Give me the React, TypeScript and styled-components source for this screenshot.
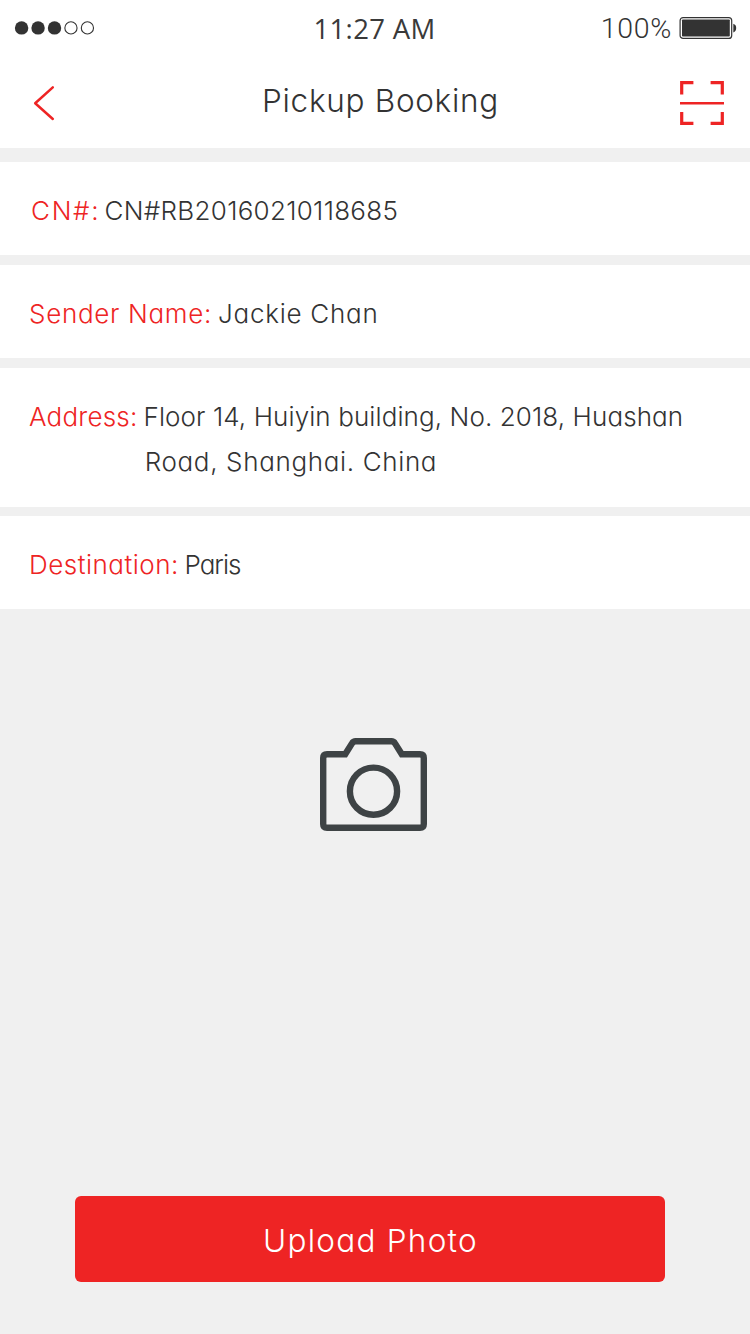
import React from 'react';
import styled, { createGlobalStyle } from 'styled-components';

const RED = '#ee2424';
const INK = '#333333';

const GlobalStyle = createGlobalStyle`
  * { box-sizing: border-box; }
  body { margin: 0; background: #f0f0f0; }
`;

const Screen = styled.main`
  display: flex;
  flex-direction: column;
  width: 750px;
  height: 1334px;
  background: #f0f0f0;
  color: ${INK};
  font-family: Inter, sans-serif;
  font-weight: 300;
  /* cv11 is Inter's single-storey "a" */
  font-feature-settings: 'cv11', 'calt' 0;
`;

const Top = styled.div`
  height: 148px;
  background: #fff;
`;

const StatusBar = styled.div`
  display: grid;
  grid-template-columns: 1fr auto 1fr;
  align-items: center;
  height: 55px;
  padding: 0 13px 0 14px;
`;

const Clock = styled.span`
  padding-right: 2px;
  font: 400 27.5px/55px 'Open Sans', sans-serif;
  letter-spacing: 0.34px;
  color: #3a3a3a;
`;

const Power = styled.div`
  display: flex;
  align-items: center;
  justify-content: flex-end;
  gap: 7px;
`;

const Percent = styled.span`
  padding-top: 1px;
  font: 300 28.5px/55px Roboto, sans-serif;
  letter-spacing: 0.7px;
`;

const NavBar = styled.header`
  display: grid;
  grid-template-columns: 60px 1fr 60px;
  height: 93px;
  padding: 26px 26px 0 33px;
`;

const IconButton = styled.button<{ $end?: boolean }>`
  display: flex;
  justify-content: ${(p) => (p.$end ? 'flex-end' : 'flex-start')};
  align-items: flex-start;
  padding: 0;
  border: 0;
  background: none;
`;

const Title = styled.h1`
  margin: 0;
  padding-left: 4px;
  font-size: 31.5px;
  font-weight: 300;
  line-height: 40px;
  letter-spacing: 0.7px;
  text-align: center;
  white-space: nowrap;
`;

const Details = styled.dl`
  display: flex;
  flex-direction: column;
  margin: 14px 0 0;
`;

const Row = styled.div<{ $gap?: number; $inset?: number; $tall?: boolean }>`
  display: flex;
  margin-bottom: ${(p) => p.$gap ?? 0}px;
  padding: 26px 0 ${(p) => (p.$tall ? 23 : 22)}px ${(p) => p.$inset ?? 29}px;
  background: #fff;
  font-size: 26px;
  line-height: 45px;
  white-space: nowrap;
`;

const Label = styled.dt<{ $width: number; $tracking: number }>`
  flex: none;
  width: ${(p) => p.$width}px;
  letter-spacing: ${(p) => p.$tracking}px;
  color: ${RED};
`;

const Value = styled.dd<{ $tracking?: number }>`
  margin: 0;
  letter-spacing: ${(p) => p.$tracking ?? 0}px;
`;

const Line = styled.div<{ $tracking: number; $indent?: number }>`
  padding-left: ${(p) => p.$indent ?? 0}px;
  letter-spacing: ${(p) => p.$tracking}px;
`;

const PhotoArea = styled.section`
  display: flex;
  flex: 1;
  flex-direction: column;
  align-items: flex-start;
  justify-content: space-between;
  padding: 129px 75px 52px;
`;

const CameraButton = styled.button`
  display: flex;
  margin-left: 245px;
  padding: 0;
  border: 0;
  background: none;
`;

const UploadButton = styled.button`
  width: 590px;
  height: 86px;
  padding: 2px 0 0 1px;
  border: 0;
  border-radius: 6px;
  background: ${RED};
  color: #fff;
  font: inherit;
  font-feature-settings: inherit;
  font-size: 31.5px;
  letter-spacing: 1.25px;
`;

const SignalDots = () => (
  <svg width="82" height="16" viewBox="0 0 82 16">
    {[0, 1, 2, 3, 4].map((i) => (
      <circle
        key={i}
        cx={7.6 + i * 16.45}
        cy="7.9"
        r={i < 3 ? 6.7 : 6.1}
        fill={i < 3 ? INK : 'none'}
        stroke={i < 3 ? 'none' : INK}
        strokeWidth="1.1"
      />
    ))}
  </svg>
);

const BatteryIcon = () => (
  <svg width="58" height="24" viewBox="0 0 58 24">
    <rect x="1.1" y="1.6" width="51.6" height="20.8" rx="3" fill="none" stroke={INK} strokeWidth="1.2" />
    <rect x="3" y="3.4" width="47.8" height="17.2" rx="0.8" fill={INK} />
    <path d="M54.3 7.8 Q57.2 8.9 57.2 12 Q57.2 15.2 54.3 16.4 Z" fill={INK} />
  </svg>
);

const BackIcon = () => (
  <svg width="24" height="40" viewBox="0 0 24 40" fill="none" stroke={RED} strokeWidth="2.5">
    <path d="M19.8 6.4 L2.2 22.3 L19.8 38" strokeLinecap="round" strokeLinejoin="round" />
  </svg>
);

const ScanIcon = () => (
  <svg width="44" height="44" viewBox="0 0 44 44" fill="none" stroke={RED} strokeWidth="3.2">
    <path d="M13.4 1.7 H1.7 V13.4 M30.6 1.7 H42.3 V13.4 M13.4 42.3 H1.7 V31 M30.6 42.3 H42.3 V31" />
    <path d="M0 22.3 H44" strokeWidth="2.4" />
  </svg>
);

const CameraIcon = () => (
  <svg width="107" height="93" viewBox="0 0 107 93" fill="none" stroke="#3e4345" strokeWidth="6.4">
    <path d="M7 16.3 H25.2 L32 5.4 Q33.3 3.2 35.6 3.2 H71.4 Q73.7 3.2 75 5.4 L81.8 16.3 H100 Q103.8 16.3 103.8 20.1 V86 Q103.8 89.8 100 89.8 H7 Q3.2 89.8 3.2 86 V20.1 Q3.2 16.3 7 16.3 Z" />
    <circle cx="53.5" cy="53.2" r="23.6" />
  </svg>
);

export default function App() {
  return (
    <Screen>
      <GlobalStyle />
      <Top>
        <StatusBar>
          <SignalDots />
          <Clock>11:27 AM</Clock>
          <Power>
            <Percent>100%</Percent>
            <BatteryIcon />
          </Power>
        </StatusBar>
        <NavBar>
          <IconButton aria-label="Back">
            <BackIcon />
          </IconButton>
          <Title>Pickup Booking</Title>
          <IconButton $end aria-label="Scan">
            <ScanIcon />
          </IconButton>
        </NavBar>
      </Top>
      <Details>
        <Row $gap={10} $inset={31}>
          <Label $width={73.5} $tracking={1.7}>CN#:</Label>
          <Value $tracking={0.3}>CN#RB20160210118685</Value>
        </Row>
        <Row $gap={10}>
          <Label $width={189} $tracking={0.7}>Sender Name:</Label>
          <Value $tracking={0.75}>Jackie Chan</Value>
        </Row>
        <Row $gap={9} $tall>
          <Label $width={114.5} $tracking={0.2}>Address:</Label>
          <Value>
            <Line $tracking={0.1}>Floor 14, Huiyin building, No. 2018, Huashan</Line>
            <Line $tracking={0.65} $indent={1.2}>Road, Shanghai. China</Line>
          </Value>
        </Row>
        <Row>
          <Label $width={155.5} $tracking={0.5}>Destination:</Label>
          <Value $tracking={-1}>Paris</Value>
        </Row>
      </Details>
      <PhotoArea>
        <CameraButton aria-label="Take photo">
          <CameraIcon />
        </CameraButton>
        <UploadButton>Upload Photo</UploadButton>
      </PhotoArea>
    </Screen>
  );
}
